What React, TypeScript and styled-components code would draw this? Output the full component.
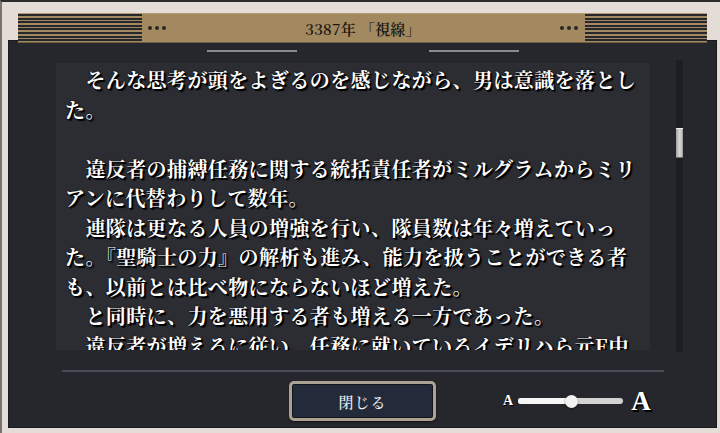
import React from "react";
import styled, { createGlobalStyle } from "styled-components";

const SERIF = `"Noto Serif CJK JP", "Liberation Serif", "Noto Sans CJK JP", serif`;

const Global = createGlobalStyle`
  html, body { margin: 0; padding: 0; background: #e4ddd7; }
  body { width: 720px; height: 433px; overflow: hidden; }
  #root { width: 720px; height: 433px; }
`;

const Frame = styled.div`
  box-sizing: border-box;
  width: 720px;
  height: 433px;
  background: #e4ddd7;
  border-top: 2px solid #2d2d2d;
  border-left: 2px solid #77736f;
  padding: 11px 3px 5px 6px;
  display: flex;
  flex-direction: column;
`;

const Header = styled.header`
  position: relative;
  z-index: 1;
  box-sizing: border-box;
  height: 30px;
  margin: 0 10px -3px;
  background: #a2895f;
  border-top: 1px solid #b39a70;
  border-bottom: 1px solid #6f5d40;
  display: flex;
  align-items: center;
`;

const Stripes = styled.div<{ $w: number }>`
  width: ${(p) => p.$w}px;
  align-self: stretch;
  background: repeating-linear-gradient(
    to bottom,
    #25272c 0px,
    #25272c 2px,
    #a2895f 2px,
    #a2895f 3.6px
  );
`;

const Dots = styled.div<{ $side: "left" | "right" }>`
  display: flex;
  gap: 3px;
  margin: ${(p) => (p.$side === "left" ? "0 0 0 6px" : "0 7px 0 0")};
`;

const Dot = styled.span`
  width: 4px;
  height: 4px;
  border-radius: 50%;
  background: #2a2824;
`;

const Title = styled.h1`
  flex: 1;
  margin: 0;
  text-align: center;
  font-family: ${SERIF};
  font-weight: 600;
  font-size: 15px;
  color: #1a1713;
  letter-spacing: 0.2px;
`;

const Panel = styled.main`
  flex: 1;
  box-sizing: border-box;
  background: #26272c;
  border: 1px solid #191a1d;
  display: flex;
  flex-direction: column;
`;

const TabRow = styled.div`
  display: flex;
  justify-content: center;
  gap: 132px;
  margin-top: 9px;
`;

const TabLine = styled.span`
  width: 90px;
  height: 2px;
  background: #8b8b8b;
`;

const Body = styled.div`
  display: flex;
  align-items: flex-start;
  margin-top: 8px;
  height: 292px;
`;

const TextBox = styled.div`
  box-sizing: border-box;
  margin: 3px 0 0 47px;
  width: 594px;
  height: 287px;
  overflow: hidden;
  background: #2c2d33;
  padding: 2px 0 0 9px;
`;

const Line = styled.div`
  height: 29.5px;
  line-height: 29.5px;
  white-space: nowrap;
  font-family: ${SERIF};
  font-weight: 700;
  font-size: 20px;
  letter-spacing: 0.4px;
  color: #ffffff;
  text-shadow: 1px 1px 0 #000, 2px 2px 1px #000, 0 0 2px #000;
`;

const ScrollTrack = styled.div`
  box-sizing: border-box;
  margin-left: 26px;
  width: 7px;
  height: 292px;
  background: #1d1e22;
  padding-top: 68px;
`;

const ScrollThumb = styled.div`
  box-sizing: border-box;
  width: 7px;
  height: 30px;
  border-top: 1px solid #f0f0f0;
  border-bottom: 1px solid #6d6d6d;
  background: linear-gradient(to right, #9e9e9e, #d6d6d6 45%, #c4c4c4 80%, #8f8f8f);
`;

const Divider = styled.hr`
  margin: 18px 0 0 53px;
  width: 602px;
  height: 2px;
  border: 0;
  background: #464c55;
`;

const Footer = styled.footer`
  display: grid;
  grid-template-columns: 1fr 147px 1fr;
  align-items: center;
  padding-top: 9px;
`;

const CloseButton = styled.button`
  grid-column: 2;
  box-sizing: border-box;
  width: 147px;
  height: 40px;
  border: 3px solid #aaa393;
  border-radius: 5px;
  background: #232b3a;
  box-shadow: inset 0 0 0 1px #12161c, 0 1px 2px rgba(0, 0, 0, 0.6);
  color: #f0f0f0;
  font-family: ${SERIF};
  font-weight: 500;
  font-size: 15px;
  letter-spacing: 1px;
  padding: 0;
  cursor: pointer;
`;

const SizeControl = styled.div`
  grid-column: 3;
  display: flex;
  align-items: center;
  margin-left: 67px;
`;

const SizeLetter = styled.span<{ $big?: boolean }>`
  font-family: "Liberation Serif", serif;
  font-weight: 700;
  font-size: ${(p) => (p.$big ? 27 : 14)}px;
  line-height: 1;
  color: #ffffff;
  text-shadow: ${(p) => (p.$big ? "2px 2px 0 #000, 1px 1px 1px #000" : "1px 1px 0 #000")};
  margin: ${(p) => (p.$big ? "0 0 0 8px" : "0 5px 0 0")};
`;

const Track = styled.div`
  position: relative;
  width: 105px;
  height: 6px;
  border-radius: 3px;
  background: #d3d3d3;
`;

const Fill = styled.div`
  height: 100%;
  border-radius: 3px;
  background: #f6f6f6;
`;

const Knob = styled.div`
  position: absolute;
  top: 50%;
  width: 13px;
  height: 13px;
  margin: -6.5px 0 0 -6.5px;
  border-radius: 50%;
  background: #f1f1f1;
  box-shadow: 0 1px 2px rgba(0, 0, 0, 0.5);
`;

const lines = [
  "　そんな思考が頭をよぎるのを感じながら、男は意識を落とし",
  "た。",
  "",
  "　違反者の捕縛任務に関する統括責任者がミルグラムからミリ",
  "アンに代替わりして数年。",
  "　連隊は更なる人員の増強を行い、隊員数は年々増えていっ",
  "た。『聖騎士の力』の解析も進み、能力を扱うことができる者",
  "も、以前とは比べ物にならないほど増えた。",
  "　と同時に、力を悪用する者も増える一方であった。",
  "　違反者が増えるに従い、任務に就いているイデリハら元E中",
];

export default function App() {
  const value = 0.51;
  return (
    <>
      <Global />
      <Frame>
        <Header>
          <Stripes $w={124} />
          <Dots $side="left">
            <Dot />
            <Dot />
            <Dot />
          </Dots>
          <Title>3387年 「視線」</Title>
          <Dots $side="right">
            <Dot />
            <Dot />
            <Dot />
          </Dots>
          <Stripes $w={122} />
        </Header>
        <Panel>
          <TabRow>
            <TabLine />
            <TabLine />
          </TabRow>
          <Body>
            <TextBox>
              {lines.map((l, i) => (
                <Line key={i}>{l || "\u00a0"}</Line>
              ))}
            </TextBox>
            <ScrollTrack>
              <ScrollThumb />
            </ScrollTrack>
          </Body>
          <Divider />
          <Footer>
            <CloseButton>閉じる</CloseButton>
            <SizeControl>
              <SizeLetter>A</SizeLetter>
              <Track>
                <Fill style={{ width: `${value * 100}%` }} />
                <Knob style={{ left: `${value * 100}%` }} />
              </Track>
              <SizeLetter $big>A</SizeLetter>
            </SizeControl>
          </Footer>
        </Panel>
      </Frame>
    </>
  );
}
